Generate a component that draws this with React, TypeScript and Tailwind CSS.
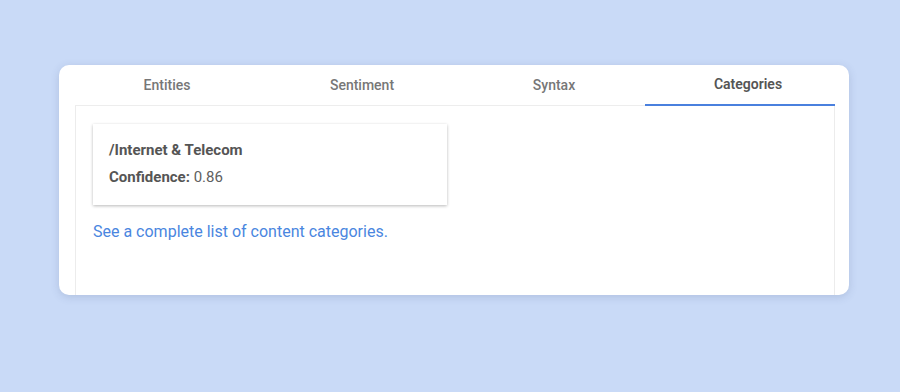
import React from "react";

export default function App() {
  const tabs = [
    { label: "Entities", active: false, cls: "pr-[6px]" },
    { label: "Sentiment", active: false, cls: "pl-[4px]" },
    { label: "Syntax", active: false, cls: "pl-[8px]" },
    { label: "Categories", active: true, cls: "pl-[16px]" },
  ];
  return (
    <div
      className="w-[900px] h-[392px] bg-[#c9daf7] pt-[65px] pl-[59px]"
      style={{ fontFamily: "Roboto, 'Liberation Sans', sans-serif" }}
    >
      <div className="w-[790px] h-[230px] bg-white rounded-[10px] shadow-[0_2px_8px_rgba(60,80,120,0.18)] pl-[16px] pr-[14px] flex flex-col overflow-hidden">
        <div className="grid grid-cols-4 h-[41px]">
          {tabs.map((t) => (
            <div
              key={t.label}
              className={`flex items-center justify-center text-[14px] ${t.cls} ${
                t.active
                  ? "font-semibold text-[#555555] border-b-[2px] border-[#4a80de]"
                  : "font-medium text-[#777777] border-b border-[#ededed]"
              }`}
            >
              {t.label}
            </div>
          ))}
        </div>
        <div className="flex-1 border-l border-r border-[#ececec] pl-[17px] pt-[18px]">
          <div className="w-[354px] h-[81px] bg-white shadow-[0_1px_3px_rgba(0,0,0,0.28)] px-[16px] pt-[16px]">
            <div className="text-[15px] leading-[20px] font-bold text-[#555555]">/Internet &amp; Telecom</div>
            <div className="mt-[7px] text-[15px] leading-[20px] text-[#606060]">
              <span className="font-bold text-[#555555]">Confidence:</span> 0.86
            </div>
          </div>
          <div className="mt-[15px] text-[16px] leading-[24px] text-[#4a86e0]">
            See a complete list of content categories.
          </div>
        </div>
      </div>
    </div>
  );
}
